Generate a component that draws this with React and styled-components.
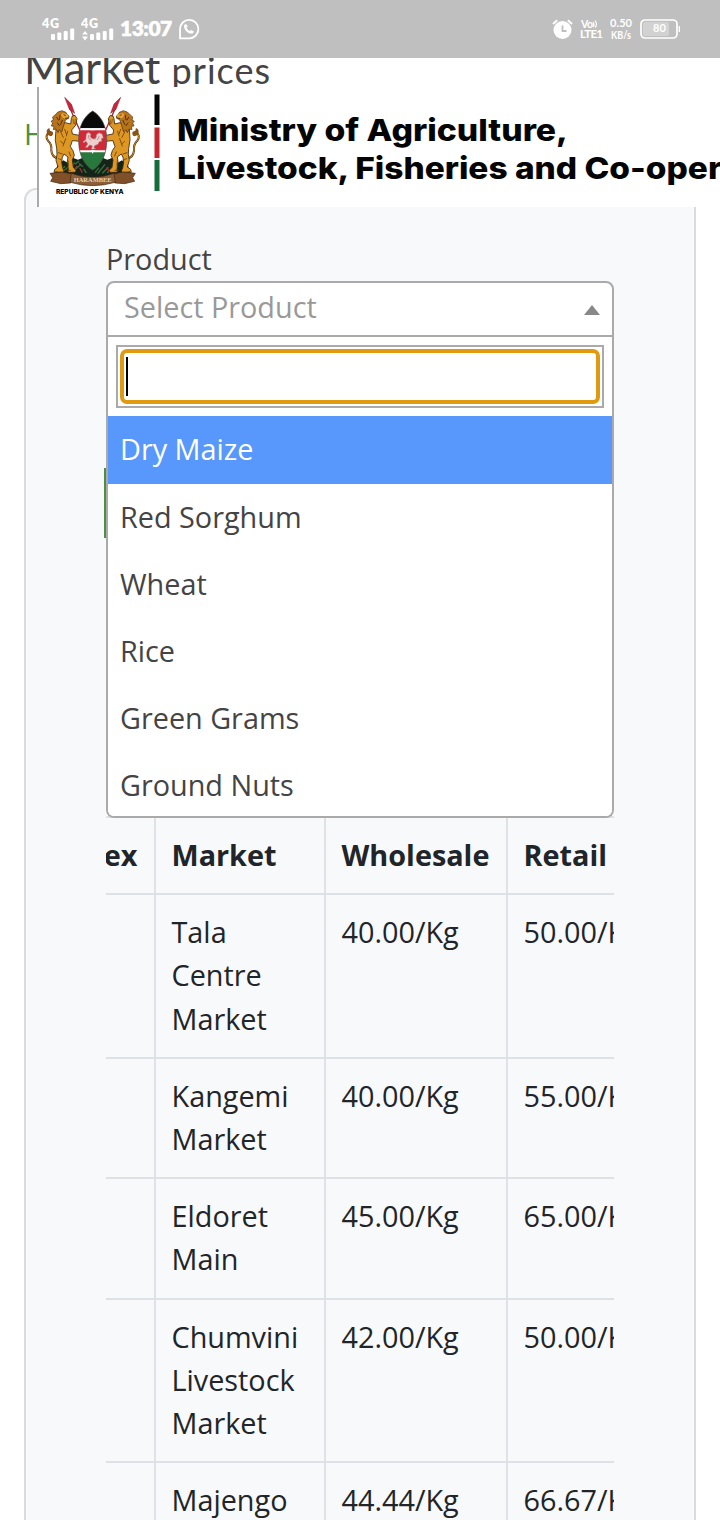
import React from "react";
import styled, { createGlobalStyle } from "styled-components";

const GlobalStyle = createGlobalStyle`
  *, *::before, *::after { box-sizing: border-box; }
  body {
    margin: 0;
    background: #fff;
    font-family: "Open Sans", "Noto Sans", sans-serif;
    font-size: 28.8px;
    line-height: 43.2px;
    color: #444;
  }
`;

const Screen = styled.div`
  position: relative;
  width: 720px;
  height: 1520px;
  overflow: hidden;
  background: #fff;
`;

const StatusBar = styled.header`
  position: absolute;
  inset: 0 0 auto 0;
  z-index: 3;
  height: 58px;
  padding: 0 40px 0 42px;
  display: flex;
  align-items: center;
  justify-content: space-between;
  background: #bfbfbf;
  color: #fff;
`;

const StatusGroup = styled.div`
  display: flex;
  align-items: center;
  gap: ${(p) => p.$gap}px;
`;

const Clock = styled.span`
  font: 800 21px/24px Lato, sans-serif;
  letter-spacing: -0.5px;
  margin-bottom: 2px;
  -webkit-text-stroke: 0.4px #fff;
`;

const Banner = styled.div`
  position: absolute;
  top: 87px;
  left: 37px;
  right: 0;
  z-index: 2;
  height: 120px;
  border-left: 2px solid #aaa;
  background: #fff;
  overflow: hidden;
  svg { display: block; }
`;

const Content = styled.main`
  padding: 40px 24px 0;
`;

const Title = styled.h1`
  margin: 0;
  height: 72px;
  line-height: 54px;
  font-family: Lato, sans-serif;
  font-weight: 400;
  font-size: 43.5px;
  white-space: nowrap;
  color: #444;
  small { font-size: 36px; letter-spacing: 1px; }
`;

const Breadcrumb = styled.nav`
  height: 76px;
  color: #4b9040;
`;

const Card = styled.section`
  height: 1400px;
  padding: 47px 80px 0;
  border: 2px solid #d9dbdd;
  border-radius: 12px;
  background: #f8f9fb;
`;

const Label = styled.label`
  display: block;
  height: 44px;
`;

const Select = styled.div`
  position: relative;
  height: 56px;
  border: 2px solid #aaa;
  border-radius: 8px 8px 0 0;
  background: #fff;
`;

const SelectValue = styled.div`
  display: flex;
  justify-content: space-between;
  align-items: center;
  height: 48px;
  padding: 0 12px 0 16px;
  color: #999;
`;

const Caret = styled.i`
  margin-top: 6px;
  border: 8px solid transparent;
  border-top: 0;
  border-bottom: 10px solid #888;
`;

const Dropdown = styled.div`
  position: absolute;
  z-index: 1;
  top: 54px;
  left: -2px;
  right: -2px;
  height: 481px;
  border: 2px solid #aaa;
  border-top: 0;
  border-radius: 0 0 8px 8px;
  background: #fff;
  overflow: hidden;
`;

const SearchFrame = styled.div`
  margin: 8px 8px;
  height: 63px;
  padding: 2px;
  border: 2px solid #aaa;
`;

const SearchField = styled.div`
  height: 55px;
  padding: 4px 2px;
  border: 4px solid #e1990f;
  border-radius: 7px;
`;

const TextCursor = styled.div`
  width: 2px;
  height: 39px;
  background: #000;
`;

const Option = styled.div`
  height: ${(p) => (p.$active ? 68 : 67)}px;
  padding: ${(p) => (p.$active ? 11 : 11.4)}px 12px;
  color: ${(p) => (p.$active ? "#fff" : "#444")};
  background: ${(p) => (p.$active ? "#5897fb" : "#fff")};
`;

const FilterButton = styled.button`
  display: block;
  width: 200px;
  height: 70px;
  margin: 131px 0 0 -2px;
  border: 2px solid #4f8f43;
  background: #4f8f43;
`;

const TableScroller = styled.div`
  margin-top: 278px;
  overflow: hidden;
`;

const Table = styled.table`
  width: 635px;
  margin-left: -65px;
  table-layout: fixed;
  border-collapse: collapse;
  color: #212529;
`;

const Col = styled.col`
  width: ${(p) => p.$w}px;
`;

const Cell = styled.td`
  padding: ${(p) => (p.$head ? 14.6 : 15)}px 15px ${(p) => (p.$head ? 17.4 : 17)}px 15.5px;
  border: 2px solid #dee2e6;
  vertical-align: top;
  text-align: left;
  font-weight: ${(p) => (p.$head ? 700 : 400)};
  &:first-child { padding-left: 14px; }
`;

const Signal = ({ arrows }) => (
  <svg width="33" height="24" viewBox="0 0 33 24" fill="#fff">
    <text x="0" y="11" fontFamily="Lato" fontWeight="800" fontSize="12.5" textLength="17">4G</text>
    <rect x="9" y="17" width="4" height="6" rx="1" />
    <rect x="15.3" y="15.5" width="4" height="7.5" rx="1" />
    <rect x="21.7" y="14" width="4" height="9" rx="1" />
    <rect x="28.2" y="11.5" width="4" height="11.5" rx="1" />
    {arrows && <path d="M1 17.5 4 14l3 3.5zM1 19.5 4 23.500l3-4z" />}
  </svg>
);

const WhatsApp = () => (
  <svg width="22" height="22" viewBox="0 0 22 22">
    <path d="M2 20.300V11A9.200 9.200 0 1 1 11 20.300Z" fill="none" stroke="#fff" strokeWidth="1.800" />
    <path d="M7.500 6.200c-.9 0-1.600.9-1.500 2.200.3 3.500 3.700 6.800 7.200 7.200 1.400.1 2.600-.8 2.600-2.100l-2.600-1.600-1.300 1.100c-1.400-.5-2.700-1.800-3.300-3.200l1.100-1.200-.9-2.200z" fill="#fff" />
  </svg>
);

const Alarm = () => (
  <svg width="21" height="21" viewBox="0 0 21 21">
    <circle cx="10.500" cy="11" r="9" fill="#fff" />
    <path d="m1 5 4.200-3.700M20 5l-4.200-3.700" stroke="#fff" strokeWidth="2" />
    <path d="M10.500 6.500v5.500h4" fill="none" stroke="#bfbfbf" strokeWidth="1.800" />
  </svg>
);

const VoLte = () => (
  <svg width="23" height="22" viewBox="0 0 23 22" fill="#fff" fontFamily="Lato" fontWeight="700">
    <text x="1" y="9.500" fontSize="10.500" textLength="12">Vo</text>
    <path d="M13 4q2 2.500 0 5M15 2.500q3 4 0 7" fill="none" stroke="#fff" strokeWidth="1.200" />
    <text x="0" y="20" fontSize="11.500" textLength="23">LTE1</text>
  </svg>
);

const NetSpeed = () => (
  <svg width="23" height="22" viewBox="0 0 23 22" fill="#fff" fontFamily="Lato" fontWeight="700">
    <text x="0" y="9" fontSize="11" textLength="22">0.50</text>
    <text x="1" y="20.500" fontSize="10.500" textLength="20" lengthAdjust="spacingAndGlyphs">KB/s</text>
  </svg>
);

const Battery = () => (
  <svg width="40" height="20" viewBox="0 0 40 20">
    <rect x="1" y="1" width="36" height="18" rx="4" fill="none" stroke="#fff" strokeWidth="1.700" />
    <rect x="3" y="3" width="26" height="14" rx="2" fill="#d2d2d2" />
    <path d="M39.300 7v6" stroke="#fff" strokeWidth="1.300" />
    <text x="13" y="12.700" fill="#fff" fontFamily="Lato" fontWeight="700" fontSize="11" textLength="13">80</text>
  </svg>
);

const Lion = () => (
  <g strokeLinejoin="round" strokeLinecap="round">
    <path d="M56 205Q36 204 34 182 36 162 24 152 14 138 26 128" fill="none" stroke="#4b2c0b" strokeWidth="6" />
    <path d="M56 205Q36 204 34 182 36 162 24 152 14 138 26 128" fill="none" stroke="#dc9420" strokeWidth="3" />
    <path d="M22 134q-6-16 6-20l2 8 8 3q4 10-6 14z" fill="#8a5213" />
    <path d="M50 104 76 98l16 4 2-16 3-8 8-2 6 10-4 20-12 14 2 12 16 3 14 6 4 10-8 5-12-3-14-1-6 18 8 12 4 14-6 14 3 22 8 9-2 6H84l1-10-3-24 2-12-12-9-5 10-2 14 3 18 4 9-2 4H42l2-9 10-7-6-20 3-18-1-18-4-24z" fill="#dd9722" stroke="#3a240d" strokeWidth="2.500" />
    <path d="m46 74 8-8 12-4 12 5 4 7 5 4-1 7-9 4-3 8-4 13-5 16-7-7-4 9-6-11-8 2 2-10-8-1 4-9-5-5 7-4-2-8z" fill="#b8731a" stroke="#4c2c0b" strokeWidth="2" />
    <path d="m66 70 12 1 7 5-1 7-10 3-7-4-4-6z" fill="#e5a536" />
    <path d="m50 82 5 8m5-14-2 13m9 2-5 12m-10-4 6 8M84 84l-8 1M72 75l4 1" fill="none" stroke="#3b210a" strokeWidth="2.500" />
    <path d="M62 126l8 16m4-24 5 14m-17 22 9 8m12-38-4 14m-24 50 12 4m10-46-8 22m-13 38 8 4m23-24 5 12m-8 14 1 14m-4 15h10m-44 4 8 2" fill="none" stroke="#68400f" strokeWidth="2.500" />
    <path d="M99 88l2 12m5-12-2 14" stroke="#68400f" strokeWidth="1.800" />
  </g>
);

const Spear = () => (
  <g>
    <path d="M90 55 120 122M120 216 108 250" stroke="#a32935" strokeWidth="4" />
    <path d="m74 22 20 20 10 28-16-12z" fill="#cf233c" stroke="#6e1d29" strokeWidth="1.500" />
  </g>
);

const CoatOfArms = () => (
  <g>
    <Spear />
    <g transform="translate(316 0) scale(-1 1)"><Spear /></g>
    <path d="m46 250 6-24 18-15 14 8 14-16 16 6 20-8 24 22 24-22 20 8 16-6 14 16 14-8 18 15 6 24-30 12H76z" fill="#152419" />
    <path d="m62 238 14-9m-10 17 22-17m-2 13 18-25m-2 24 19-16m-4-12-12 10m26 14 8 12m26-1 12-15m-4 18 22-28m-8 27 18-18m-4 16 18-14m-90-4-12-10m54 0 12-10" stroke="#38713a" strokeWidth="4" />
    <path d="m98 246 14-18m7 6 8 14m72-15 16 16" stroke="#a82a36" strokeWidth="4" />
    <Lion />
    <g transform="translate(316 0) scale(-1 1)"><Lion /></g>
    <clipPath id="shield"><path d="M158 63C184 78 203 112 200 158 198 202 180 226 158 241 136 226 118 202 116 158 113 112 132 78 158 63Z" /></clipPath>
    <g clipPath="url(#shield)">
      <path d="M110 60h96v55h-96z" fill="#090a09" />
      <path d="M110 115h96v73h-96z" fill="#fff" />
      <path d="M110 121h96v60h-96z" fill="#d02a39" />
      <path d="M110 187h96v60h-96z" fill="#28783d" />
      <path d="m153 180 5 12 5-12zM151 121q7-8 14 0z" fill="#fff" />
    </g>
    <path d="M158 63C184 78 203 112 200 158 198 202 180 226 158 241 136 226 118 202 116 158 113 112 132 78 158 63Z" fill="none" stroke="#45423b" strokeWidth="2" />
    <path d="m139 131 7-4 7 6-2 8 8 6 8-3 3-11 8-5 9 5 3 11-6 2 2 8-8 1-4 8-10 4-2 7 6 3-14 1 3-10-8-3-7 8-6-1 7-10-5-8-7 5-2-4 8-6z" fill="#eccfce" stroke="#a86b6e" strokeWidth="1.500" />
    <path d="m147 135-2 8 8 8m16-12-5 10m14-10-6 11" fill="none" stroke="#9b585d" strokeWidth="1.800" />
    <path d="m30 250 36-4 34 7-8 26-30 2-30-7 6-11zM286 250l-36-4-34 7 8 26 30 2 30-7-6-11z" fill="#805128" stroke="#3c2614" strokeWidth="2" />
    <path d="M94 250q64 24 128 0l4 27q-68 20-136 0z" fill="#8b5e38" stroke="#412713" strokeWidth="2" />
    <text x="101" y="277" fontFamily="Liberation Serif" fontSize="18" fontWeight="700" fill="#e3d0b5" textLength="114" lengthAdjust="spacingAndGlyphs">HARAMBEE</text>
  </g>
);

const MinistryLogo = () => (
  <svg width="681" height="120" viewBox="39 87 681 120">
    <g transform="translate(40 90) scale(.3333)"><CoatOfArms /></g>
    <text x="56" y="194.300" fontFamily="Inter" fontWeight="800" fontSize="6.500" textLength="67.500" lengthAdjust="spacingAndGlyphs">REPUBLIC OF KENYA</text>
    <rect x="154.500" y="94.500" width="5" height="30.500" fill="#050505" />
    <rect x="154.500" y="127.500" width="5" height="30.500" fill="#c5252f" />
    <rect x="154.500" y="160" width="5" height="31" fill="#176c3b" />
    <g fontFamily="Inter, sans-serif" fontWeight="800" fontSize="30.500" fill="#050505">
      <text x="177" y="140.700" textLength="391" lengthAdjust="spacingAndGlyphs">Ministry of Agriculture,</text>
      <text x="177" y="178.700" textLength="545" lengthAdjust="spacingAndGlyphs">Livestock, Fisheries and Co-oper</text>
    </g>
  </svg>
);

const products = ["Dry Maize", "Red Sorghum", "Wheat", "Rice", "Green Grams", "Ground Nuts"];

const prices = [
  ["Tala Centre Market", "40.00/Kg", "50.00/Kg"],
  ["Kangemi Market", "40.00/Kg", "55.00/Kg"],
  ["Eldoret Main", "45.00/Kg", "65.00/Kg"],
  ["Chumvini Livestock Market", "42.00/Kg", "50.00/Kg"],
  ["Majengo", "44.44/Kg", "66.67/Kg"],
];

export default function App() {
  return (
    <Screen>
      <GlobalStyle />
      <StatusBar>
        <StatusGroup $gap={6}>
          <Signal />
          <Signal arrows />
          <Clock>13:07</Clock>
          <WhatsApp />
        </StatusGroup>
        <StatusGroup $gap={7}>
          <Alarm />
          <VoLte />
          <NetSpeed />
          <Battery />
        </StatusGroup>
      </StatusBar>
      <Banner>
        <MinistryLogo />
      </Banner>
      <Content>
        <Title>Market <small>prices</small></Title>
        <Breadcrumb>Home</Breadcrumb>
        <Card>
          <Label>Product</Label>
          <Select>
            <SelectValue>
              Select Product
              <Caret />
            </SelectValue>
            <Dropdown>
              <SearchFrame>
                <SearchField>
                  <TextCursor />
                </SearchField>
              </SearchFrame>
              {products.map((name, i) => (
                <Option key={name} $active={i === 0}>{name}</Option>
              ))}
            </Dropdown>
          </Select>
          <FilterButton />
          <TableScroller>
            <Table>
              <colgroup>
                <Col $w={113} />
                <Col $w={170} />
                <Col $w={182} />
                <Col $w={170} />
              </colgroup>
              <thead>
                <tr>
                  {["Index", "Market", "Wholesale", "Retail"].map((h) => (
                    <Cell as="th" $head key={h}>{h}</Cell>
                  ))}
                </tr>
              </thead>
              <tbody>
                {prices.map((row) => (
                  <tr key={row[0]}>
                    <Cell />
                    {row.map((value, i) => <Cell key={i}>{value}</Cell>)}
                  </tr>
                ))}
              </tbody>
            </Table>
          </TableScroller>
        </Card>
      </Content>
    </Screen>
  );
}
